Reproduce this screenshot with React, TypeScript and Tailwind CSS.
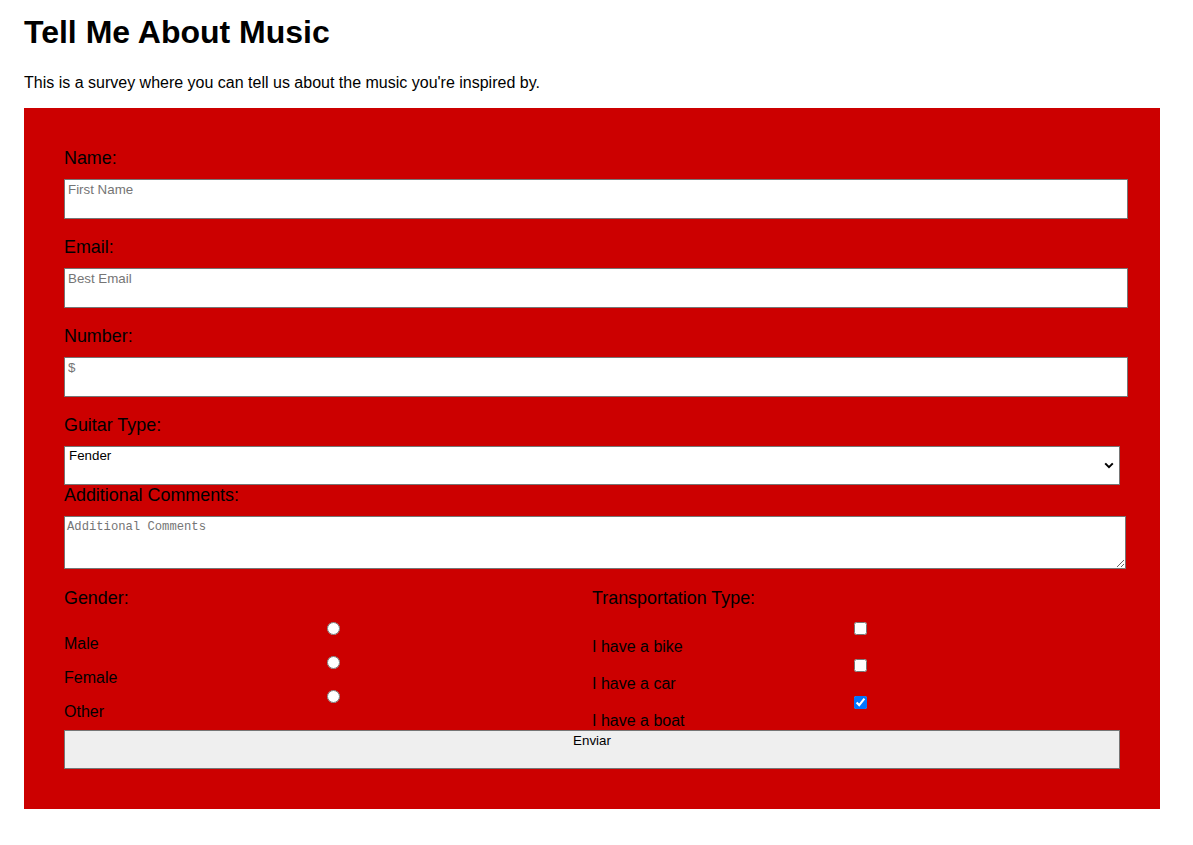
import { useState } from "react";

const genders = ["Male", "Female", "Other"];
const rides = [
  { id: "bike", label: "I have a bike" },
  { id: "car", label: "I have a car" },
  { id: "boat", label: "I have a boat" },
];

function TextField({ label, placeholder, type = "text" }: { label: string; placeholder: string; type?: string }) {
  return (
    <div className="mb-[18px]">
      <label className="block h-[20px] text-[17.9px] leading-[20px]">{label}</label>
      <input
        type={type}
        placeholder={placeholder}
        className="mt-[11px] block h-[40px] w-[1064px] border border-[#767676] bg-white px-[3px] pt-[2px] pb-[21px] text-[13.33px] leading-[15px] outline-none placeholder:text-[#757575]"
      />
    </div>
  );
}

export default function App() {
  const [gender, setGender] = useState("");
  const [checked, setChecked] = useState<Record<string, boolean>>({ bike: false, car: false, boat: true });

  return (
    <div className="min-h-screen bg-white font-['Liberation_Sans',Arial,sans-serif] text-black">
      <div className="px-6 pt-[14px] pb-8">
        <h1 className="text-[32px] font-bold leading-[37px]">Tell Me About Music</h1>
        <p className="mt-[23px] text-[16px] leading-[18px]">
          This is a survey where you can tell us about the music you're inspired by.
        </p>

        <form className="mt-[16px] w-[1136px] bg-[#cc0000] px-10 pt-10 pb-10" onSubmit={(e) => e.preventDefault()}>
          <TextField label="Name:" placeholder="First Name" />
          <TextField label="Email:" placeholder="Best Email" type="email" />
          <TextField label="Number:" placeholder="$" />

          <label className="block h-[20px] text-[17.9px] leading-[20px]">Guitar Type:</label>
          <div className="relative mt-[11px] w-[1056px]">
            <select className="block h-[39px] w-[1056px] appearance-none rounded-none border border-[#767676] bg-white pl-[4px] pt-[1px] pb-[21px] text-[13.33px] leading-[15px] text-black outline-none">
              <option>Fender</option>
              <option>Gibson</option>
              <option>Ibanez</option>
            </select>
            <svg className="pointer-events-none absolute right-[6px] top-[16px]" width="10" height="7" viewBox="0 0 10 7">
              <path d="M1.2 1.4 L5 5.2 L8.8 1.4" fill="none" stroke="#000" strokeWidth="2" />
            </svg>
          </div>

          <label className="block h-[20px] text-[17.9px] leading-[20px]">Additional Comments:</label>
          <textarea
            placeholder="Additional Comments"
            className="mt-[11px] block h-[53px] w-[1062px] border border-[#767676] bg-white px-[2px] pt-[3px] font-['Liberation_Mono',monospace] text-[12.2px] leading-[14px] outline-none placeholder:text-[#757575]"
          />

          <div className="mt-[19px] grid h-[142px] w-[1056px] grid-cols-2">
            <div>
              <p className="h-[20px] text-[17.9px] leading-[20px]">Gender:</p>
              <div className="mt-[14px]">
                {genders.map((g) => (
                  <div key={g} className="flex h-[34px] items-start">
                    <span className="w-[263px] pt-[12px] text-[16px] leading-[20px]">{g}</span>
                    <input
                      type="radio"
                      name="gender"
                      checked={gender === g}
                      onChange={() => setGender(g)}
                      className="m-0 h-[13px] w-[13px]"
                    />
                  </div>
                ))}
              </div>
            </div>
            <div>
              <p className="h-[20px] text-[17.9px] leading-[20px]">Transportation Type:</p>
              <div className="mt-[14px]">
                {rides.map((r) => (
                  <div key={r.id} className="flex h-[37px] items-start">
                    <span className="w-[262px] pt-[15px] text-[16px] leading-[20px]">{r.label}</span>
                    <input
                      type="checkbox"
                      checked={checked[r.id]}
                      onChange={() => setChecked({ ...checked, [r.id]: !checked[r.id] })}
                      className="m-0 h-[13px] w-[13px]"
                    />
                  </div>
                ))}
              </div>
            </div>
          </div>

          <button
            type="submit"
            className="relative flex h-[39px] w-[1056px] items-start justify-center border border-[#767676] bg-[#efefef] pt-[2px] text-[13.33px] leading-[15px] text-black"
          >
            Enviar
          </button>
        </form>
      </div>
    </div>
  );
}
